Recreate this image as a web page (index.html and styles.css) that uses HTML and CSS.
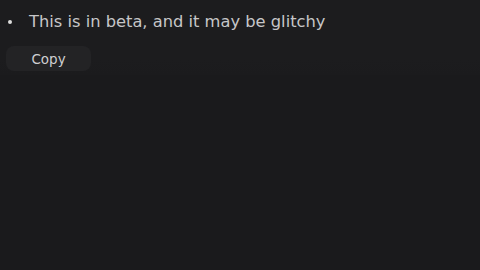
FILE: index.html
```html
<!DOCTYPE html>
<html>
<head>
<meta charset="utf-8">
<link rel="stylesheet" href="styles.css">
</head>
<body>
<div class="message">
  <ul class="list">
    <li class="item"><span class="dot"></span><span class="text">This is in beta, and it may be glitchy</span></li>
  </ul>
  <div class="actions">
    <button class="copy">Copy</button>
  </div>
</div>
</body>
</html>
```
FILE: styles.css
```css
html, body {
  margin: 0;
  padding: 0;
  background: #1a1a1c;
  height: 100%;
}
body {
  font-family: "DejaVu Sans", "Noto Sans", sans-serif;
}
.message {
  background: linear-gradient(#1c1c1e, #1c1c1e 80%, #1b1b1d);
  padding: 9px 6px 2px 6px;
  height: 64px;
}
.list {
  margin: 0;
  padding: 0;
  list-style: none;
  color: #c6c6c8;
  font-size: 16.3px;
  line-height: 25px;
}
.item {
  display: flex;
  align-items: center;
}
.dot {
  width: 4px;
  height: 4px;
  border-radius: 50%;
  background: #dcdcdc;
  margin: 0 17px 0 2px;
}
.actions {
  margin-top: 12px;
  display: flex;
}
.copy {
  width: 85px;
  height: 25px;
  border: none;
  border-radius: 8px;
  background: #232325;
  color: #cfcfd1;
  font-family: "DejaVu Sans", sans-serif;
  font-size: 13.5px;
  padding: 0;
  text-align: center;
}
```
